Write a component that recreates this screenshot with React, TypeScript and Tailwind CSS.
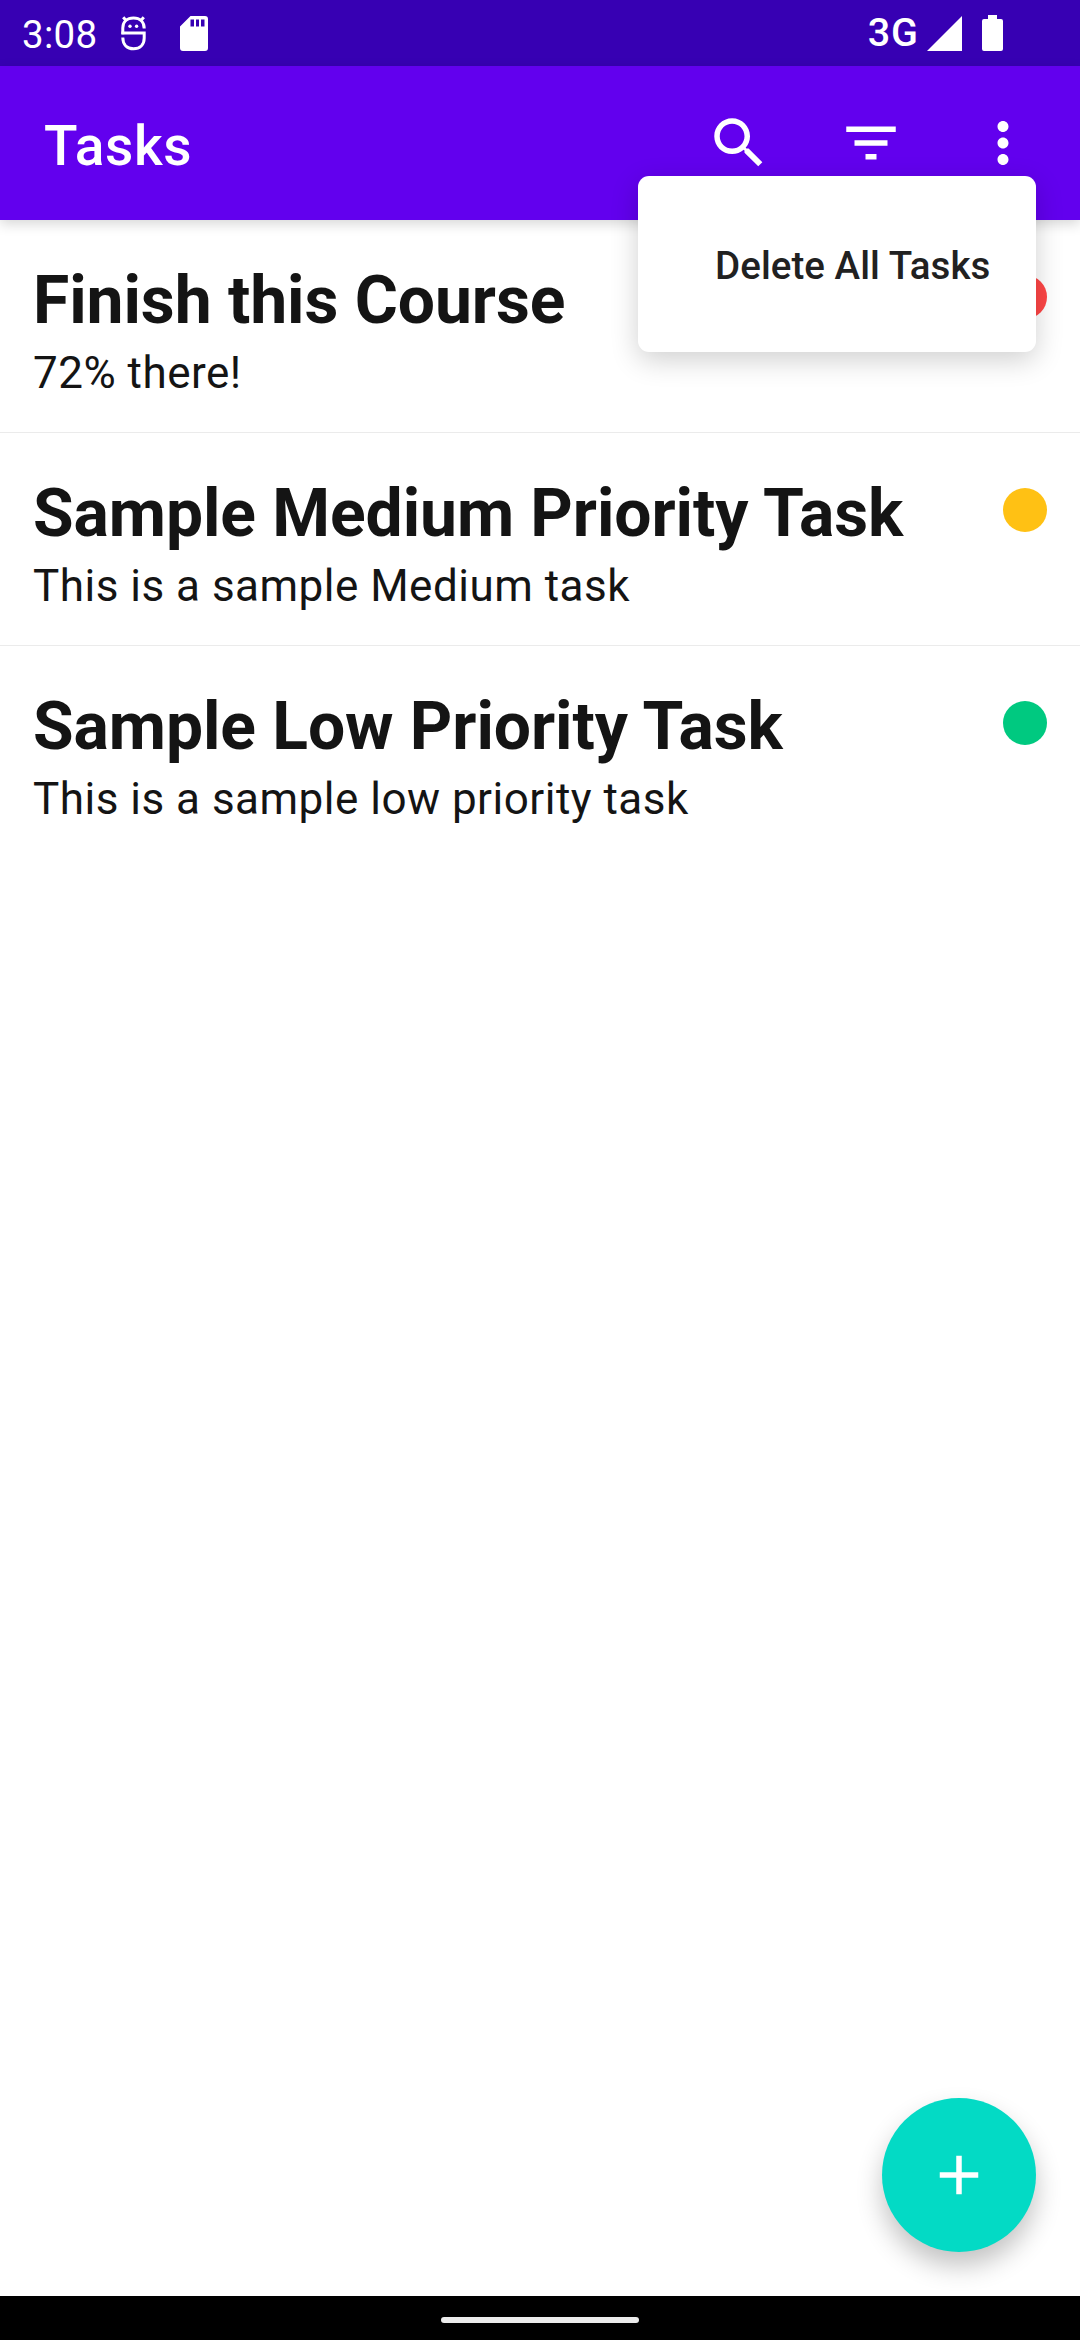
import React from "react";

type Task = { title: string; description: string; dot: string };

const tasks: Task[] = [
  { title: "Finish this Course", description: "72% there!", dot: "bg-[#ff4646]" },
  { title: "Sample Medium Priority Task", description: "This is a sample Medium task", dot: "bg-[#ffc114]" },
  { title: "Sample Low Priority Task", description: "This is a sample low priority task", dot: "bg-[#00c980]" },
];

function Icon({ d }: { d: string }) {
  return (
    <svg viewBox="0 0 24 24" className="size-[66px] shrink-0 fill-current">
      <path d={d} />
    </svg>
  );
}

const SEARCH =
  "M15.5 14h-.79l-.28-.27C15.41 12.59 16 11.11 16 9.5 16 5.91 13.09 3 9.5 3S3 5.91 3 9.5 5.91 16 9.5 16c1.61 0 3.09-.59 4.23-1.57l.27.28v.79l5 4.99L20.49 19l-4.99-5zm-6 0C7.01 14 5 11.99 5 9.5S7.01 5 9.5 5 14 7.01 14 9.5 11.99 14 9.5 14z";
const FILTER = "M10 18h4v-2h-4v2zM3 6v2h18V6H3zm3 7h12v-2H6v2z";
const MORE =
  "M12 8c1.1 0 2-.9 2-2s-.9-2-2-2-2 .9-2 2 .9 2 2 2zm0 2c-1.1 0-2 .9-2 2s.9 2 2 2 2-.9 2-2-.9-2-2-2zm0 6c-1.1 0-2 .9-2 2s.9 2 2 2 2-.9 2-2-.9-2-2-2z";
const ADD = "M19 13h-6v6h-2v-6H5v-2h6V5h2v6h6v2z";

function StatusBar() {
  return (
    <div className="flex h-[66px] shrink-0 items-center bg-[#3700b3] pl-[22px] pr-[77px] text-white">
      <span className="mt-[4px] w-[75px] text-[38.5px] leading-[46px] tracking-[0.3px]">3:08</span>
      <svg viewBox="0 0 26 36" className="ml-[24px] h-[36px] w-[26px] fill-none stroke-white" strokeWidth="3">
        <path d="M1.8 19.2V13C1.8 6.6 6.2 3.1 12.5 3.1C18.8 3.1 23.2 6.8 23.2 13.4" />
        <path d="M0.4 18H23.2V23C23.2 29.8 18.8 33.8 12.5 33.8C6.2 33.8 1.8 29.8 1.8 22.6" />
        <path d="M2.2 2.2L5.8 6.2M22.8 2.2L19.2 6.2" />
        <circle cx="9" cy="11.3" r="1.7" className="fill-white stroke-none" />
        <circle cx="15.6" cy="11.3" r="1.7" className="fill-white stroke-none" />
      </svg>
      <svg viewBox="0 0 28 35" className="ml-[33px] h-[35px] w-[28px] fill-white">
        <path
          fillRule="evenodd"
          d="M10.5 0H25Q28 0 28 3V32Q28 35 25 35H3Q0 35 0 32V10.5ZM10.5 3.5V10.5H14V3.5ZM16 3.5V10.5H19V3.5ZM21 3.5V10.5H24.5V3.5Z"
        />
      </svg>
      <span className="ml-auto text-[39.5px] font-medium leading-[46px] tracking-[1px]">3G</span>
      <svg viewBox="0 0 35 35" className="ml-[8px] size-[35px] fill-white">
        <path d="M35 0V35H0Z" />
      </svg>
      <svg viewBox="0 0 21 36" className="ml-[20px] h-[36px] w-[21px] fill-white">
        <path d="M6 0H15V4H19Q21 4 21 6V34Q21 36 19 36H2Q0 36 0 34V6Q0 4 2 4H6Z" />
      </svg>
    </div>
  );
}

export default function App() {
  return (
    <div className="relative flex h-[2340px] w-[1080px] flex-col overflow-hidden bg-white font-['Roboto',sans-serif] text-[#141414]">
      <StatusBar />
      <header className="relative z-10 flex h-[154px] shrink-0 items-center bg-[#6200ee] px-[44px] text-white shadow-[0_4px_12px_rgba(0,0,0,0.16)]">
        <h1 className="mt-[6px] text-[55px] font-medium leading-[64px] tracking-[0.7px]">Tasks</h1>
        <div className="ml-auto flex gap-[66px]">
          <Icon d={SEARCH} />
          <Icon d={FILTER} />
          <Icon d={MORE} />
        </div>
      </header>
      <main className="flex-1">
        {tasks.map((t, i) => (
          <section
            key={t.title}
            className={`flex h-[213px] items-start justify-between px-[33px] ${i < 2 ? "border-b border-[#ebebeb]" : ""}`}
          >
            <div className="pt-[42px]">
              <h2 className="text-[66px] font-bold leading-[77px] tracking-[-0.07px]">{t.title}</h2>
              <p className="mt-[8px] text-[44px] leading-[52px] tracking-[0.49px]">{t.description}</p>
            </div>
            <span className={`mt-[55px] size-[44px] rounded-full ${t.dot}`} />
          </section>
        ))}
      </main>
      <footer className="flex h-[44px] shrink-0 items-center justify-center bg-black pt-[4px]">
        <span className="h-[6px] w-[198px] rounded-full bg-[#ebebeb]" />
      </footer>
      <div className="absolute left-[638px] top-[176px] z-20 flex h-[176px] w-[398px] items-center rounded-[11px] bg-white pl-[77px] shadow-[0_8px_28px_rgba(0,0,0,0.19)]">
        <span className="mt-[4px] whitespace-nowrap text-[38.5px] font-medium leading-[46px] tracking-[0.06px] text-[#212121]">
          Delete All Tasks
        </span>
      </div>
      <button
        aria-label="Add task"
        className="absolute left-[882px] top-[2098px] flex size-[154px] items-center justify-center rounded-full bg-[#03dac5] text-white shadow-[0_14px_26px_rgba(0,0,0,0.24)]"
      >
        <Icon d={ADD} />
      </button>
    </div>
  );
}
